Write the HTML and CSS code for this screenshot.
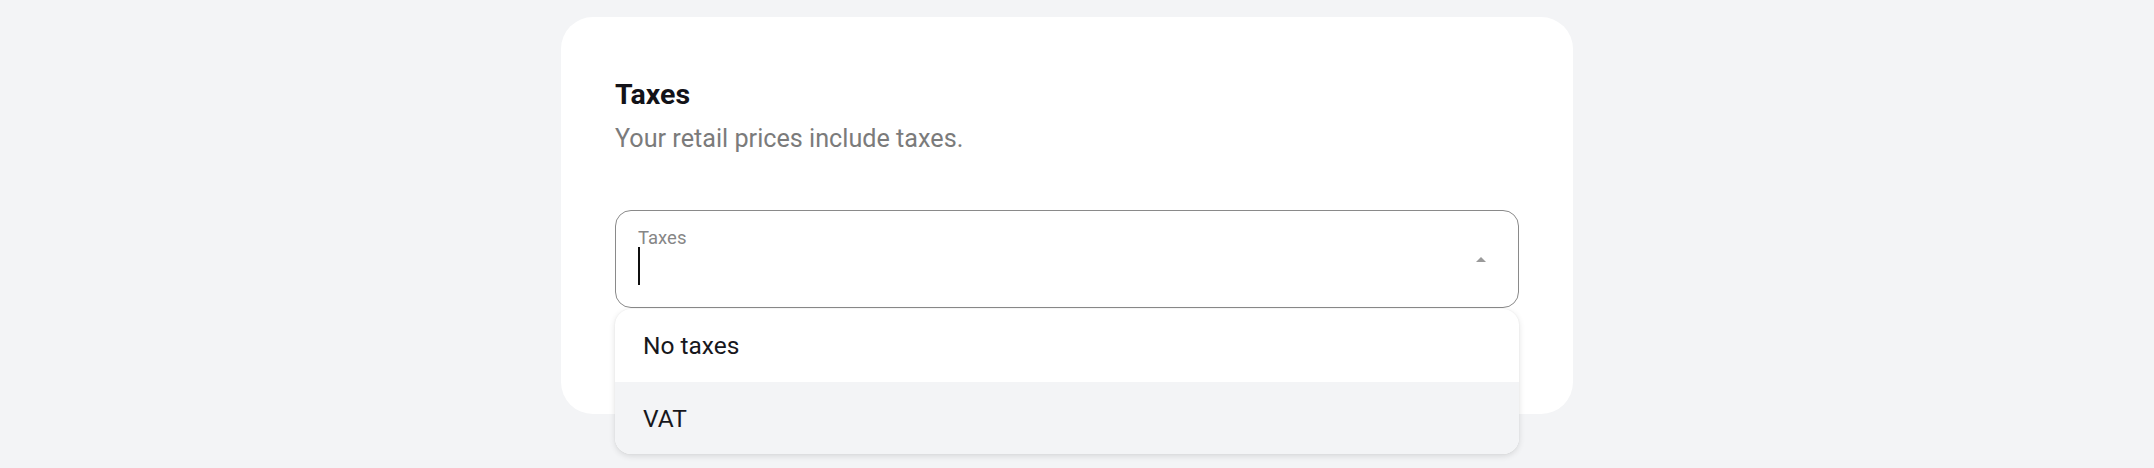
FILE: index.html
```html
<!DOCTYPE html>
<html lang="en">
<head>
<meta charset="utf-8">
<title>Taxes</title>
<link rel="stylesheet" href="styles.css">
</head>
<body>
<div class="page">
  <section class="card">
    <h2 class="title">Taxes</h2>
    <p class="subtitle">Your retail prices include taxes.</p>
    <div class="select">
      <div class="field">
        <div class="field-body">
          <span class="label">Taxes</span>
          <span class="caret"></span>
        </div>
        <span class="arrow"></span>
      </div>
      <ul class="menu">
        <li class="option">No taxes</li>
        <li class="option option-active">VAT</li>
      </ul>
    </div>
  </section>
</div>
</body>
</html>
```
FILE: styles.css
```css
* { box-sizing: border-box; }
html, body {
  margin: 0;
  padding: 0;
  background: #f3f4f6;
  font-family: Roboto, "Liberation Sans", Arial, sans-serif;
}
.page {
  display: flex;
  justify-content: center;
  padding: 17px 20px 0 0;
  height: 468px;
  overflow: hidden;
}
.card {
  width: 1012px;
  height: 397px;
  background: #ffffff;
  border-radius: 32px;
  padding: 61px 54px 0 54px;
}
.title {
  margin: 0;
  font-size: 28.5px;
  line-height: 34px;
  font-weight: 700;
  color: #131318;
}
.subtitle {
  margin: 11px 0 0 0;
  font-size: 25.2px;
  line-height: 32px;
  color: #7b7b7b;
}
.select {
  position: relative;
  margin-top: 55px;
}
.field {
  height: 98px;
  border: 1px solid #8a8a8a;
  border-radius: 16px;
  display: flex;
  align-items: flex-start;
  justify-content: space-between;
  padding: 18px 32px 0 22px;
}
.field-body {
  display: flex;
  flex-direction: column;
  align-items: flex-start;
}
.label {
  font-size: 18.5px;
  line-height: 18px;
  color: #868686;
}
.caret {
  width: 2px;
  height: 38px;
  background: #0f0f0f;
}
.arrow {
  align-self: center;
  margin-top: -18px;
  width: 0;
  height: 0;
  border-left: 5px solid transparent;
  border-right: 5px solid transparent;
  border-bottom: 5px solid #9a9a9a;
}
.menu {
  position: absolute;
  left: 0;
  right: 0;
  top: 99px;
  margin: 0;
  padding: 0;
  list-style: none;
  background: #ffffff;
  border-radius: 16px;
  overflow: hidden;
  box-shadow: 0 2px 6px rgba(0, 0, 0, 0.12), 0 0 2px rgba(0, 0, 0, 0.06);
}
.option {
  height: 73px;
  display: flex;
  align-items: center;
  padding: 0 28px;
  font-size: 24.5px;
  color: #17171c;
}
.option-active {
  height: 72px;
  background: #f3f4f6;
}
```
